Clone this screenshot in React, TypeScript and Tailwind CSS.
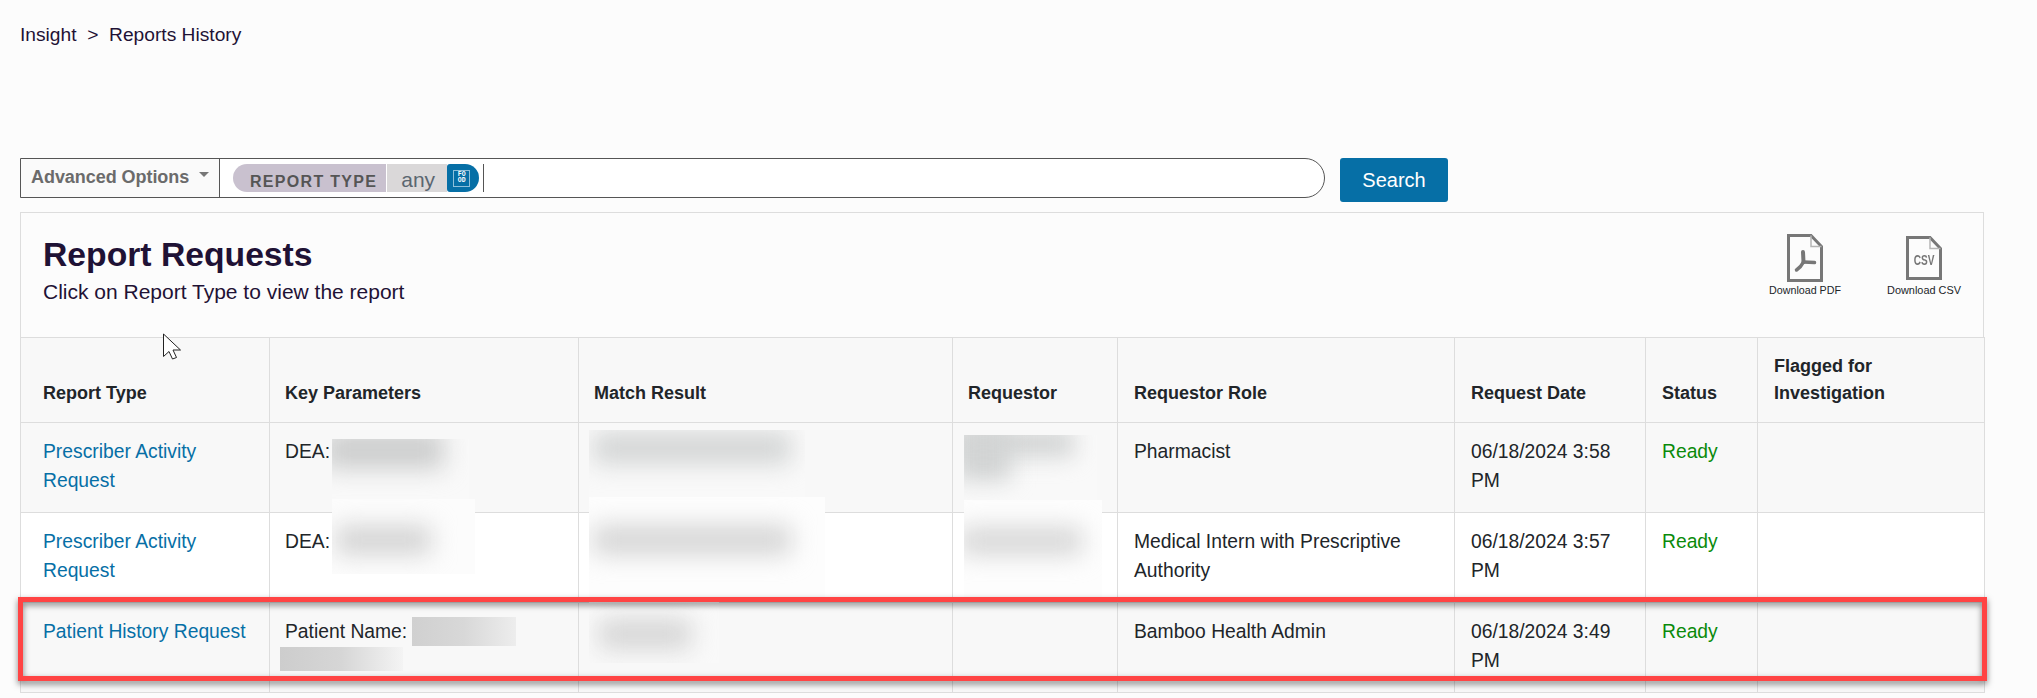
import React from "react";

const F = "font-['Liberation_Sans',Arial,sans-serif]";

type Row = { type: string; key: string; role: string; date: string; bg: string };
const rows: Row[] = [
  { type: "Prescriber Activity Request", key: "DEA:", role: "Pharmacist", date: "06/18/2024 3:58 PM", bg: "bg-[#f8f8f8]" },
  { type: "Prescriber Activity Request", key: "DEA:", role: "Medical Intern with Prescriptive Authority", date: "06/18/2024 3:57 PM", bg: "bg-white" },
  { type: "Patient History Request", key: "Patient Name:", role: "Bamboo Health Admin", date: "06/18/2024 3:49 PM", bg: "bg-[#f8f8f8]" },
];

const th = "border border-[#dddddd] px-[15px] pt-[15px] pb-[15px] text-left align-bottom text-[18px] leading-[27px] font-bold text-[#212529]";
const td = "border border-[#dddddd] px-[15px] pt-[15px] pb-[16.5px] align-top text-[19.3px] leading-[28.8px] text-[#212529]";

function FileIcon({ children, w, h }: { children?: React.ReactNode; w: number; h: number }) {
  return (
    <svg width={w} height={h} viewBox={`0 0 ${w} ${h}`} fill="none">
      <path d={`M1.5 1.5H${w - 12}L${w - 1.5} 12.5V${h - 1.5}H1.5Z`} stroke="#777777" strokeWidth="3" fill="#fcfcfc" />
      <path d={`M${w - 12} 1.5V12.5H${w - 1.5}`} stroke="#b5b5b5" strokeWidth="1.5" />
      {children}
    </svg>
  );
}

export default function App() {
  return (
    <div className={`${F} relative h-[698px] w-full overflow-hidden bg-[#fcfcfc]`}>
      <div className="h-[158px] pl-5 pt-[21px] text-[19.2px] leading-7 text-[#1f1235] whitespace-pre">Insight  {">"}  Reports History</div>

      <div className="ml-5 flex items-start">
        <div className="flex h-10 w-[1305px] border-[1.5px] border-[#555555] bg-white rounded-r-[20px]">
          <div className="flex w-[199px] shrink-0 items-center gap-[10px] border-r-[1.5px] border-[#555555] bg-[#fafafa] pl-[10px]">
            <span className="text-[18px] font-bold text-[#6b6b6b] -mt-0.5 tracking-[-0.05px]">Advanced Options</span>
            <span className="mb-[8px] h-0 w-0 border-x-[5px] border-t-[5px] border-x-transparent border-t-[#777777]" />
          </div>
          <div className="flex items-center pl-[13px]">
            <span className="flex h-7 items-center rounded-l-[14px] bg-[#c9c1cf] pl-[17px] pr-[9px] pt-[8px] text-[16px] font-bold tracking-[1.3px] text-[#555555] border-r border-white">REPORT TYPE</span>
            <span className="flex h-7 w-[60px] items-center bg-[#dad8d9] pl-[14px] pt-[4px] text-[21px] text-[#5b6670]">any</span>
            <span className="flex h-7 w-[32px] items-center rounded-l-[3px] rounded-r-[14px] bg-[#066fa6] pl-[6px]">
              <span className="flex h-[17px] w-[17px] items-center justify-center border border-[#8fc0da] text-center font-['Liberation_Mono',monospace] text-[6.5px] leading-[6.5px] font-bold text-white">FO<br />OD</span>
            </span>
            <span className="ml-1 h-7 w-px bg-[#555555]" />
          </div>
        </div>
        <button className="ml-[15px] h-11 w-[108px] rounded-[3px] bg-[#066fa6] text-[20px] text-white">Search</button>
      </div>

      <div className="mt-[10px] ml-5 w-[1964px] border-x border-t border-[#dddddd]">
        <div className="flex h-[124px] justify-between">
          <div className="pl-[22px] pt-[19px]">
            <h1 className="text-[33.7px] leading-[44px] font-bold text-[#1f1235]">Report Requests</h1>
            <p className="mt-[2px] text-[21px] leading-[28px] text-[#1f1235]">Click on Report Type to view the report</p>
          </div>
          <div className="flex">
            <div className="flex w-[120px] flex-col items-center pt-[21px]">
              <FileIcon w={36} h={48}>
                <g stroke="#777777" strokeLinecap="round" fill="none">
                  <path d="M16 18L16.5 28" strokeWidth="4" />
                  <path d="M16.5 28Q14 33 9.5 36" strokeWidth="3.5" />
                  <path d="M16.5 28Q22 28 27.5 28.5" strokeWidth="3.5" />
                </g>
              </FileIcon>
              <span className="whitespace-nowrap text-[10.7px] leading-4 text-[#212529]">Download PDF</span>
            </div>
            <div className="flex w-[118px] flex-col items-center pt-[23px]">
              <div className="relative flex h-[44px] w-[36px]">
                <FileIcon w={36} h={44} />
                <span className="absolute inset-x-0 top-[14px] scale-x-[0.72] text-center text-[14px] leading-[20px] font-bold text-[#777777]">CSV</span>
              </div>
              <span className="mt-[2px] whitespace-nowrap text-[10.9px] leading-4 text-[#212529]">Download CSV</span>
            </div>
          </div>
        </div>

        <table className="w-[1964px] table-fixed border-collapse -ml-px">
          <thead>
            <tr className="bg-[#f8f8f8]">
              <th className={`${th} w-[249px] pl-[22px]`}>Report Type</th>
              <th className={`${th} w-[309px]`}>Key Parameters</th>
              <th className={`${th} w-[374px]`}>Match Result</th>
              <th className={`${th} w-[165px]`}>Requestor</th>
              <th className={`${th} w-[337px] pl-4`}>Requestor Role</th>
              <th className={`${th} w-[191px] pl-4`}>Request Date</th>
              <th className={`${th} w-[112px] pl-4`}>Status</th>
              <th className={`${th} w-[227px] pl-4`}>Flagged for Investigation</th>
            </tr>
          </thead>
          <tbody>
            {rows.map((r, i) => (
              <tr key={i} className={r.bg}>
                <td className={`${td} pl-[22px]`}><a className="text-[#066fa6]">{r.type}</a></td>
                <td className={td}>{r.key}</td>
                <td className={td} />
                <td className={td} />
                <td className={`${td} pl-4`}>{r.role}</td>
                <td className={`${td} pl-4`}>{r.date}</td>
                <td className={`${td} pl-4`}><span className="text-[#0a8a0a]">Ready</span></td>
                <td className={td} />
              </tr>
            ))}
          </tbody>
        </table>
      </div>

      {/* redaction patches */}
      <div className="absolute left-[332px] top-[439px] h-[61px] w-[137px] overflow-hidden bg-[#f9f9f9]">
        <div className="absolute left-[-8px] top-[-8px] h-[38px] w-[120px] bg-[#cccdcd] blur-[12px]" />
      </div>
      <div className="absolute left-[332px] top-[499px] h-[75px] w-[143px] overflow-hidden bg-[#fcfcfc]">
        <div className="absolute left-[4px] top-[27px] h-[28px] w-[95px] bg-[#d2d2d2] blur-[12px]" />
      </div>
      <div className="absolute left-[589px] top-[430px] h-[67px] w-[216px] overflow-hidden bg-[#f9f9f9]">
        <div className="absolute left-[4px] top-[2px] h-[32px] w-[198px] bg-[#d3d5d5] blur-[12px]" />
      </div>
      <div className="absolute left-[589px] top-[497px] h-[100px] w-[236px] overflow-hidden bg-[#fdfdfd]">
        <div className="absolute left-[4px] top-[28px] h-[30px] w-[198px] bg-[#d5d5d5] blur-[12px]" />
      </div>
      <div className="absolute left-[589px] top-[597px] h-[66px] w-[130px] overflow-hidden bg-[#f9f9f9]">
        <div className="absolute left-[10px] top-[22px] h-[30px] w-[92px] bg-[#d5d5d5] blur-[12px]" />
      </div>
      <div className="absolute left-[964px] top-[435px] h-[65px] w-[133px] overflow-hidden bg-[#f9f9f9]">
        <div className="absolute left-[-8px] top-[-6px] h-[28px] w-[118px] bg-[#d2d4d4] blur-[11px]" />
        <div className="absolute left-[-8px] top-[-6px] h-[52px] w-[55px] bg-[#d2d4d4] blur-[11px]" />
      </div>
      <div className="absolute left-[964px] top-[500px] h-[97px] w-[138px] overflow-hidden bg-[#fdfdfd]">
        <div className="absolute left-[-4px] top-[27px] h-[28px] w-[122px] bg-[#d6d6d6] blur-[12px]" />
      </div>
      <div className="absolute left-[412px] top-[617px] h-[29px] w-[104px] bg-linear-to-r from-[#d0d0d0] via-[#d8d8d8] to-[#ededed]" />
      <div className="absolute left-[280px] top-[647px] h-[24px] w-[123px] bg-linear-to-r from-[#cdcdcd] via-[#d6d6d6] to-[#f4f4f4]" />

      {/* highlight */}
      <div className="absolute left-[18px] top-[597px] h-[84px] w-[1969px] border-[5px] border-[#ff4444] drop-shadow-[0_3px_3px_rgba(0,0,0,0.5)]" />

      {/* pointer */}
      <svg className="absolute left-[162px] top-[333px]" width="20" height="28" viewBox="0 0 20 28" fill="none">
        <path d="M1.5 1V23.5L7 18.5L10.5 26L14.5 24.5L11 17H18.5Z" fill="#ffffff" stroke="#222222" strokeWidth="1" />
      </svg>
    </div>
  );
}
